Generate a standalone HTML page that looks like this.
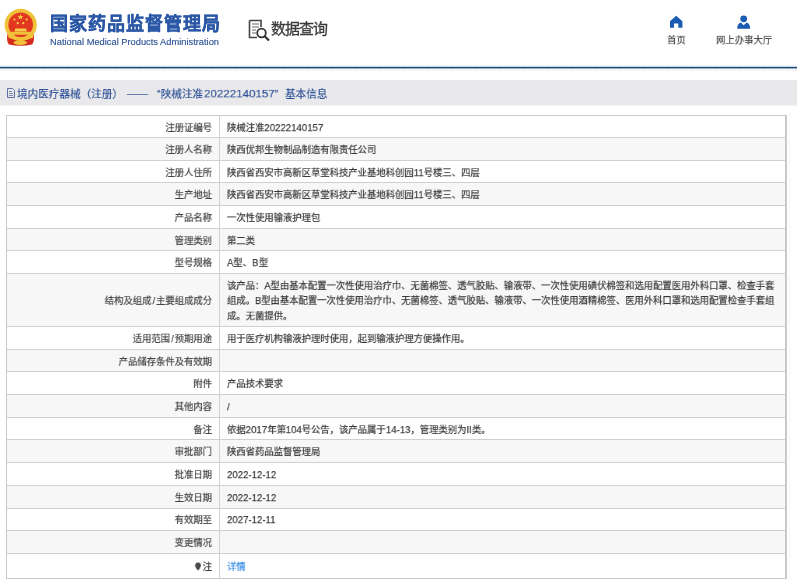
<!DOCTYPE html>
<html lang="zh-CN"><head><meta charset="utf-8">
<style>
*{margin:0;padding:0;box-sizing:border-box}
html,body{width:797px;height:587px;overflow:hidden;background:#fff}
body{position:relative;font-family:"Liberation Sans",sans-serif;color:#333}
.abs{position:absolute;white-space:nowrap;will-change:transform}
#title{left:50px;top:11.5px;font-size:18px;font-weight:900;color:#2b58a6;-webkit-text-stroke:0.35px #2b58a6;line-height:24px;letter-spacing:1px}
#en{left:50px;top:35.8px;font-size:9.3px;color:#2f5597;-webkit-text-stroke:0.15px #2f5597;line-height:12px}
#sjcx{left:270.5px;top:19px;font-size:15px;letter-spacing:-0.85px;color:#3a3a3a;-webkit-text-stroke:0.3px #3a3a3a;line-height:20px}
.navt{font-size:12px;color:#444;line-height:14px;top:35.3px;transform:scale(0.78);transform-origin:left top;-webkit-text-stroke:0.2px #444}
#bline{left:0;top:65px;width:797px;height:4px;background:linear-gradient(#f0fbfb 0 1px,#c9d5e1 1px 2px,#1d4878 2px 3px,#9db0c4 3px 4px)}
#dash{left:0;top:69px;width:797px;height:2px;background:repeating-linear-gradient(90deg,#e9e9e9 0 1.5px,#fbfbfb 1.5px 3px)}
#band{left:0;top:80px;width:797px;height:26px;background:linear-gradient(#e9e9eb 0 25px,#f3f3f4 25px 26px)}
#crumb,.cr{top:85.5px;font-size:14px;line-height:20px;color:#2c4f96;transform:scale(0.757);transform-origin:left top;-webkit-text-stroke:0.2px #2c4f96}
.rowbg{left:6px;width:781px}
.hl{left:6px;width:781px;height:1px;background:#d0d0d0}
.lab{right:585px;font-size:12px;line-height:19.29px;color:#444;text-align:right;-webkit-text-stroke:0.25px #444;transform:scale(0.7775);transform-origin:right top}
.val{left:227px;font-size:12px;line-height:19.29px;color:#3a3a3a;-webkit-text-stroke:0.25px #3a3a3a;transform:scale(0.7775);transform-origin:left top}
.n{font-size:12.4px}
.link{color:#3a8ee6;-webkit-text-stroke:0.25px #3a8ee6}
</style></head><body>
<!-- emblem -->
<svg class="abs" style="left:0px;top:0px" width="42" height="50" viewBox="0 0 42 50">
  <path d="M7.5 34 Q6 41 9 44.5 Q20.5 47 32 44.5 Q35 41 33.5 34 Z" fill="#d42a1e"/>
  <circle cx="20.7" cy="24.8" r="14.2" fill="#e2381f" stroke="#f0c23a" stroke-width="3.8"/>
  <path d="M15.2 28.4 H26.2 L26.8 31.6 H14.6 Z" fill="#f4cd4a"/>
  <path d="M11 31.7 H30.5 L31.5 34.8 H10 Z" fill="#f0c23a"/>
  <path d="M8 34.5 Q20.7 40.5 33.5 34.5 L33 37.8 Q20.7 43 8.5 37.8 Z" fill="#f0c23a"/>
  <ellipse cx="20.2" cy="42.6" rx="6.8" ry="2.4" fill="#f0c23a"/>
  <polygon points="20.4,14 21.2,16.2 23.4,16.2 21.6,17.5 22.3,19.6 20.4,18.3 18.5,19.6 19.2,17.5 17.4,16.2 19.6,16.2" fill="#f8d84e"/>
  <circle cx="14.4" cy="19.5" r="1.1" fill="#f8d84e"/><circle cx="26.7" cy="19.5" r="1.1" fill="#f8d84e"/>
  <circle cx="17.7" cy="23.2" r="1.1" fill="#f8d84e"/><circle cx="23.3" cy="23.2" r="1.1" fill="#f8d84e"/>
</svg>
<div id="title" class="abs">国家药品监督管理局</div>
<div id="en" class="abs">National Medical Products Administration</div>
<!-- data query icon -->
<svg class="abs" style="left:248px;top:19px" width="24" height="23" viewBox="0 0 24 23">
  <path d="M1.5 1.5 H13 V8 M1.5 1.5 V18.5 H9" fill="none" stroke="#444" stroke-width="1.6"/>
  <path d="M4 5 H11 M4 8 H11 M4 11 H8 M4 14 H8" stroke="#666" stroke-width="1.2"/>
  <circle cx="13.5" cy="14" r="4.3" fill="none" stroke="#333" stroke-width="1.8"/>
  <path d="M16.5 17 L21 21.5" stroke="#333" stroke-width="2.2"/>
</svg>
<div id="sjcx" class="abs">数据查询</div>
<!-- nav icons -->
<svg class="abs" style="left:669px;top:15px" width="14" height="13" viewBox="669 15 14 13">
  <path d="M676.2 15.8 L682.4 21.3 V27.8 H678.3 V23.6 H674 V27.8 H670 V21.3 Z" fill="#1a5bb3"/>
</svg>
<div class="abs navt" style="left:667px">首页</div>
<svg class="abs" style="left:736px;top:14px" width="16" height="16" viewBox="736 14 16 16">
  <circle cx="743.7" cy="18.8" r="3.4" fill="#1a5bb3"/>
  <path d="M737.2 28.7 Q737.4 23.6 740.8 22.6 L743.7 25.2 L746.6 22.6 Q750 23.6 750.2 28.7 Z" fill="#1a5bb3"/>
</svg>
<div class="abs navt" style="left:716px">网上办事大厅</div>
<div id="bline" class="abs"></div>
<div id="dash" class="abs"></div>
<div id="band" class="abs"></div>
<svg class="abs" style="left:6px;top:87px" width="11" height="12" viewBox="6 87 11 12">
  <path d="M7.5 88.5 H12.5 L14.5 90.5 V97.5 H7.5 Z" fill="none" stroke="#5f73a6" stroke-width="1"/>
  <path d="M9 91.5 H12 M9 93.5 H13 M9 95.5 H13" stroke="#7d8fb8" stroke-width="1"/>
</svg>
<div class="abs cr" style="left:16.5px">境内医疗器械（注册）</div>
<div class="abs cr" style="left:127px">——</div>
<div class="abs cr" style="left:157px">“陕械注准</div>
<div class="abs cr" style="left:204px"><span style="font-size:15.3px">20222140157</span>”</div>
<div class="abs cr" style="left:284.5px">基本信息</div>
<div class="abs rowbg" style="top:115.00px;height:22.00px;background:#ffffff"></div>
<div class="abs lab" style="top:120.50px">注册证编号</div>
<div class="abs val" style="top:120.50px">陕械注准<span class="n">20222140157</span></div>
<div class="abs rowbg" style="top:137.00px;height:22.70px;background:#f7f7f7"></div>
<div class="abs hl" style="top:137px"></div>
<div class="abs lab" style="top:142.85px">注册人名称</div>
<div class="abs val" style="top:142.85px">陕西优邦生物制品制造有限责任公司</div>
<div class="abs rowbg" style="top:159.70px;height:22.70px;background:#ffffff"></div>
<div class="abs hl" style="top:160px"></div>
<div class="abs lab" style="top:165.55px">注册人住所</div>
<div class="abs val" style="top:165.55px">陕西省西安市高新区草堂科技产业基地科创园<span class="n">11</span>号楼三、四层</div>
<div class="abs rowbg" style="top:182.40px;height:22.70px;background:#f7f7f7"></div>
<div class="abs hl" style="top:182px"></div>
<div class="abs lab" style="top:188.25px">生产地址</div>
<div class="abs val" style="top:188.25px">陕西省西安市高新区草堂科技产业基地科创园<span class="n">11</span>号楼三、四层</div>
<div class="abs rowbg" style="top:205.10px;height:22.70px;background:#ffffff"></div>
<div class="abs hl" style="top:205px"></div>
<div class="abs lab" style="top:210.95px">产品名称</div>
<div class="abs val" style="top:210.95px">一次性使用输液护理包</div>
<div class="abs rowbg" style="top:227.80px;height:22.70px;background:#f7f7f7"></div>
<div class="abs hl" style="top:228px"></div>
<div class="abs lab" style="top:233.65px">管理类别</div>
<div class="abs val" style="top:233.65px">第二类</div>
<div class="abs rowbg" style="top:250.50px;height:22.70px;background:#ffffff"></div>
<div class="abs hl" style="top:250px"></div>
<div class="abs lab" style="top:256.35px">型号规格</div>
<div class="abs val" style="top:256.35px"><span class="n">A</span>型、<span class="n">B</span>型</div>
<div class="abs rowbg" style="top:273.20px;height:52.80px;background:#f7f7f7"></div>
<div class="abs hl" style="top:273px"></div>
<div class="abs lab" style="top:294.10px">结构及组成<span style="margin:0 1.4px">/</span>主要组成成分</div>
<div class="abs val" style="top:278.85px;line-height:19.421px">该产品：<span class="n">A</span>型由基本配置一次性使用治疗巾、无菌棉签、透气胶贴、输液带、一次性使用碘伏棉签和选用配置医用外科口罩、检查手套<br>组成。<span class="n">B</span>型由基本配置一次性使用治疗巾、无菌棉签、透气胶贴、输液带、一次性使用酒精棉签、医用外科口罩和选用配置检查手套组<br>成。无菌提供。</div>
<div class="abs rowbg" style="top:326.00px;height:22.70px;background:#ffffff"></div>
<div class="abs hl" style="top:326px"></div>
<div class="abs lab" style="top:331.85px">适用范围<span style="margin:0 1.4px">/</span>预期用途</div>
<div class="abs val" style="top:331.85px">用于医疗机构输液护理时使用，起到输液护理方便操作用。</div>
<div class="abs rowbg" style="top:348.70px;height:22.70px;background:#f7f7f7"></div>
<div class="abs hl" style="top:349px"></div>
<div class="abs lab" style="top:354.55px">产品储存条件及有效期</div>
<div class="abs rowbg" style="top:371.40px;height:22.70px;background:#ffffff"></div>
<div class="abs hl" style="top:371px"></div>
<div class="abs lab" style="top:377.25px">附件</div>
<div class="abs val" style="top:377.25px">产品技术要求</div>
<div class="abs rowbg" style="top:394.10px;height:22.70px;background:#f7f7f7"></div>
<div class="abs hl" style="top:394px"></div>
<div class="abs lab" style="top:399.95px">其他内容</div>
<div class="abs val" style="top:399.95px"><span class="n">/</span></div>
<div class="abs rowbg" style="top:416.80px;height:22.70px;background:#ffffff"></div>
<div class="abs hl" style="top:417px"></div>
<div class="abs lab" style="top:422.65px">备注</div>
<div class="abs val" style="top:422.65px">依据<span class="n">2017</span>年第<span class="n">104</span>号公告，该产品属于<span class="n">14-13</span>，管理类别为<span class="n">II</span>类。</div>
<div class="abs rowbg" style="top:439.50px;height:22.70px;background:#f7f7f7"></div>
<div class="abs hl" style="top:439px"></div>
<div class="abs lab" style="top:445.35px">审批部门</div>
<div class="abs val" style="top:445.35px">陕西省药品监督管理局</div>
<div class="abs rowbg" style="top:462.20px;height:22.70px;background:#ffffff"></div>
<div class="abs hl" style="top:462px"></div>
<div class="abs lab" style="top:468.05px">批准日期</div>
<div class="abs val" style="top:468.05px"><span class="n">2022-12-12</span></div>
<div class="abs rowbg" style="top:484.90px;height:22.70px;background:#f7f7f7"></div>
<div class="abs hl" style="top:485px"></div>
<div class="abs lab" style="top:490.75px">生效日期</div>
<div class="abs val" style="top:490.75px"><span class="n">2022-12-12</span></div>
<div class="abs rowbg" style="top:507.60px;height:22.70px;background:#ffffff"></div>
<div class="abs hl" style="top:508px"></div>
<div class="abs lab" style="top:513.45px">有效期至</div>
<div class="abs val" style="top:513.45px"><span class="n">2027-12-11</span></div>
<div class="abs rowbg" style="top:530.30px;height:22.70px;background:#f7f7f7"></div>
<div class="abs hl" style="top:530px"></div>
<div class="abs lab" style="top:536.15px">变更情况</div>
<div class="abs rowbg" style="top:553.00px;height:25.00px;background:#ffffff"></div>
<div class="abs hl" style="top:553px"></div>
<div class="abs lab" style="top:560.00px"><svg width="8" height="11" viewBox="0 0 8 11" style="vertical-align:-1px;margin-right:2px"><path d="M4 0.3 C1.8 0.3 0.2 1.9 0.2 4 C0.2 6.5 4 10.8 4 10.8 C4 10.8 7.8 6.5 7.8 4 C7.8 1.9 6.2 0.3 4 0.3 Z" fill="#4a4a4a"/></svg>注</div>
<div class="abs val link" style="top:560.00px">详情</div>
<div class="abs" style="left:789px;top:113px;width:1px;height:467px;background:#f7f7f7"></div>
<div class="abs" style="left:6px;top:115px;width:1px;height:464px;background:#c9c9c9"></div>
<div class="abs" style="left:785px;top:115px;width:2px;height:464px;background:#c9c9c9"></div>
<div class="abs" style="left:6px;top:115px;width:781px;height:1px;background:#c9c9c9"></div>
<div class="abs" style="left:6px;top:578px;width:781px;height:1px;background:#c9c9c9"></div>
<div class="abs" style="left:219px;top:115px;width:1px;height:464px;background:#d0d0d0"></div>
</body></html>
